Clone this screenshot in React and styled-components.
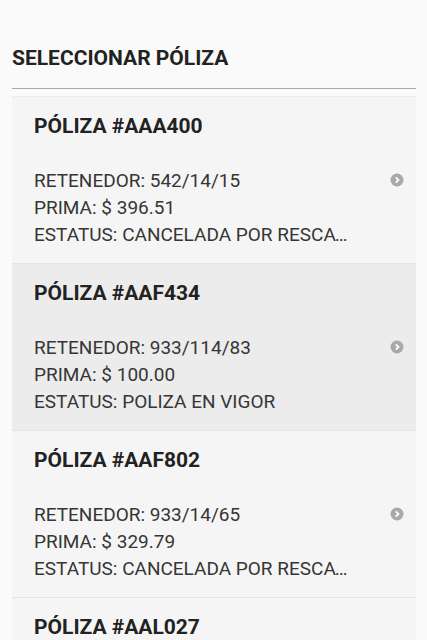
import React from "react";
import styled, { createGlobalStyle } from "styled-components";

const Global = createGlobalStyle`
  html, body { margin: 0; padding: 0; background: #fafafa; }
  body { font-family: Roboto, "Noto Sans", sans-serif; }
`;

const Page = styled.div`
  height: 640px;
  overflow: hidden;
  padding: 0 11px 0 12px;
  background: #fafafa;
`;

const Heading = styled.h1`
  margin: 0;
  padding-top: 44px;
  height: 44px;
  font-size: 21px;
  font-weight: 700;
  color: #222;
  line-height: 28px;
  border-bottom: 1px solid #a8a8a8;
  box-sizing: content-box;
`;

const List = styled.div`
  margin-top: 7px;
  border-top: 1px solid #ececec;
  background: #f5f5f5;
`;

const Item = styled.div`
  height: 167px;
  box-sizing: border-box;
  padding: 17px 22px 0 22px;
  background: ${(p) => (p.$selected ? "#ececec" : "#f5f5f5")};
  border-bottom: 1px solid #e4e4e4;
`;

const Title = styled.div`
  font-size: 21px;
  font-weight: 700;
  color: #222;
  line-height: 25px;
`;

const Body = styled.div`
  margin-top: 28px;
  display: flex;
  align-items: flex-start;
`;

const Lines = styled.div`
  flex: 1;
  min-width: 0;
  padding-right: 32px;
`;

const Line = styled.div`
  font-size: 19px;
  color: #363636;
  line-height: 27px;
  white-space: nowrap;
  overflow: hidden;
  text-overflow: ellipsis;
`;

const Chevron = styled.svg`
  width: 14px;
  height: 14px;
  margin-top: 6px;
  margin-right: -10px;
  flex: none;
`;

const items = [
  { id: "AAA400", ret: "542/14/15", prima: "396.51", est: "CANCELADA POR RESCATE TOTAL" },
  { id: "AAF434", ret: "933/114/83", prima: "100.00", est: "POLIZA EN VIGOR", selected: true },
  { id: "AAF802", ret: "933/14/65", prima: "329.79", est: "CANCELADA POR RESCATE TOTAL" },
  { id: "AAL027", ret: "933/14/65", prima: "100.00", est: "POLIZA EN VIGOR" },
];

export default function App() {
  return (
    <Page>
      <Global />
      <Heading>SELECCIONAR PÓLIZA</Heading>
      <List>
        {items.map((it) => (
          <Item key={it.id} $selected={it.selected}>
            <Title>PÓLIZA #{it.id}</Title>
            <Body>
              <Lines>
                <Line>RETENEDOR: {it.ret}</Line>
                <Line>PRIMA: $ {it.prima}</Line>
                <Line>ESTATUS: {it.est}</Line>
              </Lines>
              <Chevron viewBox="0 0 14 14">
                <circle cx="7" cy="7" r="6.5" fill="#a9a9a9" />
                <path d="M5.8 4.3 L8.5 7 L5.8 9.7" stroke="#fff" strokeWidth="1.8" fill="none" />
              </Chevron>
            </Body>
          </Item>
        ))}
      </List>
    </Page>
  );
}
